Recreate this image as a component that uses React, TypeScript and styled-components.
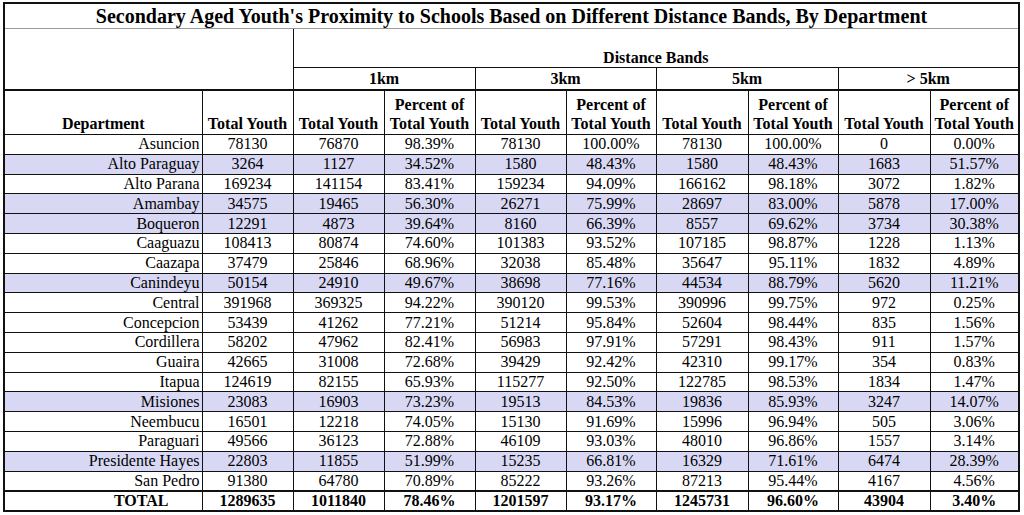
import React from "react";
import styled, { createGlobalStyle } from "styled-components";

const Global = createGlobalStyle`
  html, body { margin: 0; padding: 0; background: #fff; }
  body { font-family: "Liberation Serif", "Times New Roman", serif; color: #000; }
`;

const Page = styled.div`
  padding: 2px 0 0 3px;
`;

const Table = styled.table`
  width: 1015px;
  table-layout: fixed;
  border-collapse: collapse;
  border: 2px solid #111;
  font-family: "Liberation Serif", "Times New Roman", serif;
`;

const TitleCell = styled.th`
  height: 24px;
  padding: 0;
  font-size: 20px;
  font-weight: bold;
  text-align: center;
  vertical-align: middle;
  border-bottom: 1px solid #9a9a9a;
  line-height: 1;
`;

const BlankCell = styled.td`
  padding: 0;
  border: none;
`;

const BandsCell = styled.th`
  height: 37px;
  padding: 0 0 1px 0;
  font-size: 16px;
  font-weight: bold;
  text-align: center;
  vertical-align: bottom;
  border-bottom: 1px solid #111;
  border-left: 1px solid #111;
  line-height: 17px;
`;

const BandCell = styled.th`
  height: 21px;
  padding: 0;
  font-size: 16px;
  font-weight: bold;
  text-align: center;
  vertical-align: middle;
  border-left: 1px solid #111;
  line-height: 1;
`;

const HeadCell = styled.th`
  height: 42px;
  padding: 0 0 1px 0;
  font-size: 16px;
  font-weight: bold;
  text-align: center;
  vertical-align: bottom;
  border-top: 2px solid #111;
  border-left: 1px solid #111;
  border-bottom: 1px solid #111;
  line-height: 19px;
  white-space: nowrap;
`;

const Row = styled.tr<{ $hl?: boolean; $total?: boolean }>`
  height: 19.8px;
  background: ${(p) => (p.$hl ? "#d8d8f4" : "#fff")};
  font-weight: ${(p) => (p.$total ? "bold" : "normal")};
  & > td {
    border-top: ${(p) => (p.$total ? "2px" : "1px")} solid #111;
  }
`;

const DeptCell = styled.td<{ $total?: boolean }>`
  padding: ${(p) => (p.$total ? "0 0 0 76px" : "0 2px 0 0")};
  font-size: 16px;
  text-align: ${(p) => (p.$total ? "center" : "right")};
  vertical-align: middle;
  border-left: 1px solid #111;
  line-height: 1;
  white-space: nowrap;
`;

const NumCell = styled.td`
  padding: 0;
  font-size: 16px;
  text-align: center;
  vertical-align: middle;
  border-left: 1px solid #111;
  line-height: 1;
  white-space: nowrap;
`;

type R = [string, number, number, string, number, string, number, string, number, string, boolean?];

const rows: R[] = [
  ["Asuncion", 78130, 76870, "98.39%", 78130, "100.00%", 78130, "100.00%", 0, "0.00%"],
  ["Alto Paraguay", 3264, 1127, "34.52%", 1580, "48.43%", 1580, "48.43%", 1683, "51.57%", true],
  ["Alto Parana", 169234, 141154, "83.41%", 159234, "94.09%", 166162, "98.18%", 3072, "1.82%"],
  ["Amambay", 34575, 19465, "56.30%", 26271, "75.99%", 28697, "83.00%", 5878, "17.00%", true],
  ["Boqueron", 12291, 4873, "39.64%", 8160, "66.39%", 8557, "69.62%", 3734, "30.38%", true],
  ["Caaguazu", 108413, 80874, "74.60%", 101383, "93.52%", 107185, "98.87%", 1228, "1.13%"],
  ["Caazapa", 37479, 25846, "68.96%", 32038, "85.48%", 35647, "95.11%", 1832, "4.89%"],
  ["Canindeyu", 50154, 24910, "49.67%", 38698, "77.16%", 44534, "88.79%", 5620, "11.21%", true],
  ["Central", 391968, 369325, "94.22%", 390120, "99.53%", 390996, "99.75%", 972, "0.25%"],
  ["Concepcion", 53439, 41262, "77.21%", 51214, "95.84%", 52604, "98.44%", 835, "1.56%"],
  ["Cordillera", 58202, 47962, "82.41%", 56983, "97.91%", 57291, "98.43%", 911, "1.57%"],
  ["Guaira", 42665, 31008, "72.68%", 39429, "92.42%", 42310, "99.17%", 354, "0.83%"],
  ["Itapua", 124619, 82155, "65.93%", 115277, "92.50%", 122785, "98.53%", 1834, "1.47%"],
  ["Misiones", 23083, 16903, "73.23%", 19513, "84.53%", 19836, "85.93%", 3247, "14.07%", true],
  ["Neembucu", 16501, 12218, "74.05%", 15130, "91.69%", 15996, "96.94%", 505, "3.06%"],
  ["Paraguari", 49566, 36123, "72.88%", 46109, "93.03%", 48010, "96.86%", 1557, "3.14%"],
  ["Presidente Hayes", 22803, 11855, "51.99%", 15235, "66.81%", 16329, "71.61%", 6474, "28.39%", true],
  ["San Pedro", 91380, 64780, "70.89%", 85222, "93.26%", 87213, "95.44%", 4167, "4.56%"],
];

const total: R = ["TOTAL", 1289635, 1011840, "78.46%", 1201597, "93.17%", 1245731, "96.60%", 43904, "3.40%"];

const widths = [198, 91, 91, 91, 91, 90, 92, 90, 92, 89];
const bands = ["1km", "3km", "5km", "> 5km"];

function DataRow({ r, isTotal }: { r: R; isTotal?: boolean }) {
  const [name, ...rest] = r;
  const cells = rest.slice(0, 9);
  return (
    <Row $hl={!!r[10]} $total={isTotal}>
      <DeptCell $total={isTotal}>{name}</DeptCell>
      {cells.map((c, i) => (
        <NumCell key={i}>{String(c)}</NumCell>
      ))}
    </Row>
  );
}

export default function App() {
  return (
    <>
      <Global />
      <Page>
        <Table>
          <colgroup>
            {widths.map((w, i) => (
              <col key={i} style={{ width: w }} />
            ))}
          </colgroup>
          <thead>
            <tr>
              <TitleCell colSpan={10}>
                Secondary Aged Youth's Proximity to Schools Based on Different Distance Bands, By Department
              </TitleCell>
            </tr>
            <tr>
              <BlankCell colSpan={2} rowSpan={2} />
              <BandsCell colSpan={8}>Distance Bands</BandsCell>
            </tr>
            <tr>
              {bands.map((b) => (
                <BandCell key={b} colSpan={2}>
                  {b}
                </BandCell>
              ))}
            </tr>
            <tr>
              <HeadCell>Department</HeadCell>
              <HeadCell>Total Youth</HeadCell>
              {bands.map((b) => (
                <React.Fragment key={b}>
                  <HeadCell>Total Youth</HeadCell>
                  <HeadCell>
                    Percent of
                    <br />
                    Total Youth
                  </HeadCell>
                </React.Fragment>
              ))}
            </tr>
          </thead>
          <tbody>
            {rows.map((r) => (
              <DataRow key={r[0]} r={r} />
            ))}
            <DataRow r={total} isTotal />
          </tbody>
        </Table>
      </Page>
    </>
  );
}
